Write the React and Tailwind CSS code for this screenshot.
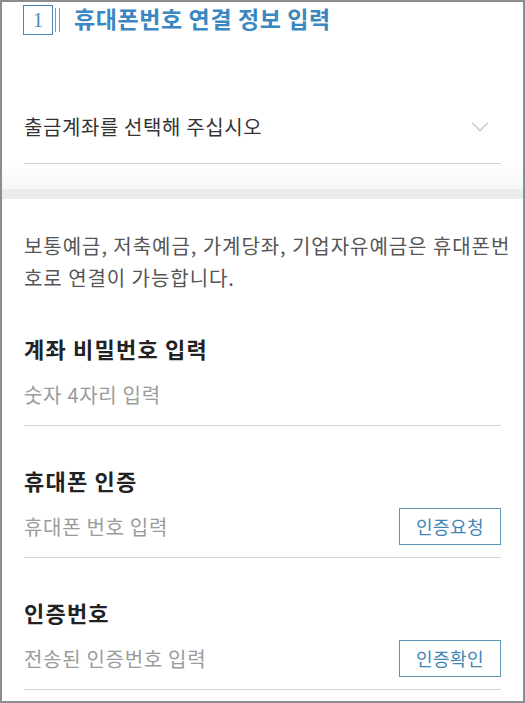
import { ChevronDown } from 'lucide-react'

const font = { fontFamily: '"Noto Sans CJK KR", "Noto Sans", sans-serif' }

function Field({ label, placeholder, action }) {
  return (
    <div className="mt-[39px] pb-[12px] border-b border-[#d3d3d3]">
      <div className="h-[30px] leading-[30px] text-[22px] font-bold text-[#222] tracking-[1.2px]">{label}</div>
      <div className="mt-[13px] h-[37px] flex items-center justify-between">
        <span className="text-[20px] text-[#9b9b9b] tracking-[0.7px]">{placeholder}</span>
        {action && (
          <button className="w-[102px] h-[37px] border border-[#5f93b3] text-[18px] text-[#3f86b6] bg-white tracking-[0.5px]">
            {action}
          </button>
        )}
      </div>
    </div>
  )
}

export default function App() {
  return (
    <div style={font} className="w-[525px] h-[703px] border-2 border-[#8d8d8d] bg-white overflow-hidden">
      {/* 단계 제목 */}
      <div className="px-[21px] pt-[3px] flex items-center h-[33px]">
        <div className="w-[30px] h-[30px] border border-[#4b88b7] flex items-center justify-center text-[20px] text-[#4b88b7] font-['Liberation_Serif',serif]">
          1
        </div>
        <div className="ml-[2px] w-px h-[24px] bg-[#6f9fc2]" />
        <div className="ml-[3px] w-px h-[24px] bg-[#6f9fc2]" />
        <h2 className="ml-[14px] -mt-[3px] text-[23px] font-bold text-[#3a87c2] tracking-[0.6px]">휴대폰번호 연결 정보 입력</h2>
      </div>

      {/* 출금계좌 선택 */}
      <div className="mx-[22px] mt-[77px] pb-[21px] border-b border-[#d0d0d0] flex items-center justify-between">
        <span className="h-[28px] leading-[28px] text-[20px] text-[#333] tracking-[0.6px]">출금계좌를 선택해 주십시오</span>
        <ChevronDown className="mr-[6px] w-[30px] h-[30px] text-[#c4c4c4]" strokeWidth={1} />
      </div>

      <div className="h-[25px] bg-gradient-to-b from-white to-[#f6f7f8]" />
      <div className="h-[10px] bg-[#eaecee]" />

      <div className="px-[22px]">
        <p className="mt-[31px] text-[20px] leading-[32px] text-[#555] tracking-[0.95px] whitespace-nowrap">
          보통예금, 저축예금, 가계당좌, 기업자유예금은 휴대폰번<br />호로 연결이 가능합니다.
        </p>

        <Field label="계좌 비밀번호 입력" placeholder="숫자 4자리 입력" />
        <Field label="휴대폰 인증" placeholder="휴대폰 번호 입력" action="인증요청" />
        <Field label="인증번호" placeholder="전송된 인증번호 입력" action="인증확인" />
      </div>
    </div>
  )
}
